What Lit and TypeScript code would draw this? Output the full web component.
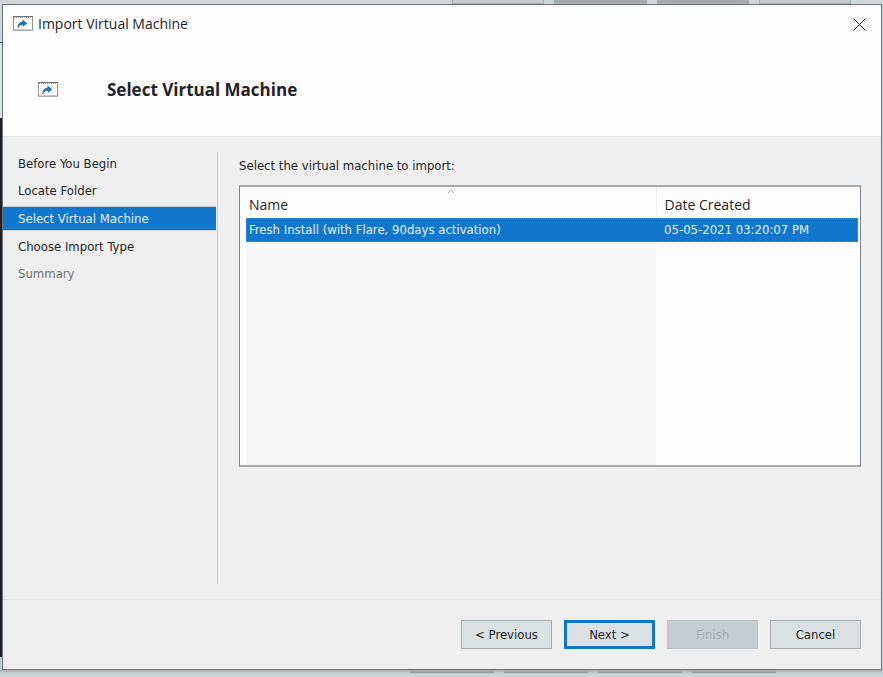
import { LitElement, html, css, svg } from "lit";
import { customElement, state } from "lit/decorators.js";

interface Machine {
  name: string;
  created: string;
}

const STEPS = [
  { label: "Before You Begin" },
  { label: "Locate Folder" },
  { label: "Select Virtual Machine", current: true },
  { label: "Choose Import Type" },
  { label: "Summary", pending: true },
];

const MACHINES: Machine[] = [
  { name: "Fresh Install (with Flare, 90days activation)", created: "05-05-2021 03:20:07 PM" },
];

const importIcon = svg`
  <svg width="20" height="16" viewBox="0 0 20 16" aria-hidden="true">
    <rect x="0.5" y="0.5" width="19" height="14" fill="#fdfdfd" stroke="#a5abae"/>
    <path d="M0 0.5H20" stroke="#69747a"/>
    <path d="M1 1.5H19" stroke="#8d979c" stroke-dasharray="1 1"/>
    <path d="M0.5 1V14M19.5 1V14" stroke="#8d979c"/>
    <path d="M1 13.5H19" stroke="#c6cdd0"/>
    <path d="M5 12C4.8 8.4 6.6 6.4 9.5 6V3.6L14.2 7.3L9.8 11V8.8C7.6 8.8 6.4 9.8 5 12Z" fill="#1177cd"/>
    <path d="M5 12C4.8 8.4 6.6 6.4 9.5 6" fill="none" stroke="#5d676f"/>
  </svg>`;

@customElement("app-root")
export class AppRoot extends LitElement {
  static styles = css`
    :host {
      display: block;
      font-family: "DejaVu Sans Condensed", "DejaVu Sans", sans-serif;
      font-stretch: condensed;
      font-size: 13px;
      line-height: 18px;
      color: #1f2326;
    }
    * {
      box-sizing: border-box;
    }
    .desktop {
      display: flex;
      flex-direction: column;
      min-height: 100vh;
      background:
        linear-gradient(#c6cdd0, #c6cdd0) right / 2px 100% no-repeat,
        linear-gradient(#d0d7da 0 42px, #3a3f42 42px 43px, #d9e1e3 43px 118px, #231f20 118px calc(100% - 20px), #c6cdd0 calc(100% - 20px));
    }
    .behind {
      display: flex;
      gap: 10px;
      height: 4px;
      padding: 0 32px 0 452px;
      background: #d0d7da;
    }
    .behind-tab {
      flex: 1;
      background: #c6cdd0;
      border: 1px solid #a5abae;
      border-top: 0;
    }
    .behind-tab.dim {
      background: #a5abae;
    }
    .below {
      display: flex;
      gap: 10px;
      height: 7px;
      padding: 0 107px 0 410px;
      background: linear-gradient(#a5abae, #c6cdd0 3px, #d0d7da);
    }
    .below-tab {
      flex: 1;
      height: 3px;
      background: #a5abae;
      border-bottom: 1px solid #8d979c;
    }
    .dialog {
      flex: 1;
      display: flex;
      flex-direction: column;
      margin: 0 1px 0 2px;
      border: 1px solid #69747a;
      background: #efefef;
    }
    .head {
      background: #fdfdfd;
      border-bottom: 1px solid #e2e4e4;
      height: 132px;
    }
    .titlebar {
      display: flex;
      align-items: center;
      gap: 5px;
      height: 38px;
      padding: 0 15px 0 10px;
      font-family: "Open Sans", sans-serif;
      font-size: 14px;
      font-stretch: normal;
    }
    .title {
      flex: 1;
    }
    .titlebar svg,
    .banner svg {
      display: block;
    }
    .close {
      border: 0;
      padding: 0;
      background: none;
    }
    .banner {
      display: flex;
      align-items: center;
      gap: 49px;
      height: 94px;
      padding: 0 35px;
    }
    h1 {
      margin: 0;
      font-family: "Open Sans", sans-serif;
      font-stretch: normal;
      font-size: 17px;
      line-height: 24px;
    }
    .body {
      flex: 1;
      display: flex;
      padding: 15px 20px 15px 0;
    }
    nav {
      width: 215px;
      flex: none;
      padding: 0 1px 0 0;
      border-right: 1px solid #c6cdd0;
    }
    ol {
      list-style: none;
      margin: 0;
      padding: 0;
      display: grid;
      gap: 4px;
    }
    .step {
      display: block;
      padding: 0 15px;
      line-height: 23px;
      color: inherit;
      text-decoration: none;
    }
    .step.current {
      background: #1177cd;
      background-clip: padding-box;
      border: solid #c6cdd0;
      border-width: 1px 0;
      color: #e6eef3;
    }
    .step.pending {
      color: #69747a;
    }
    main {
      flex: 1;
      padding: 5px 0 0 21px;
    }
    .prompt {
      margin: 0 0 10px;
    }
    .list {
      height: 282px;
      border: 1px solid #7d888e;
      border-top: 2px solid #a5abae;
      border-bottom: 2px solid #a5abae;
      padding: 0 2px 0 6px;
      background: #fdfdfd;
      display: flex;
    }
    table {
      flex: 1;
      height: 100%;
      border-collapse: collapse;
      table-layout: fixed;
    }
    th,
    td {
      padding: 0 0 0 3px;
      text-align: left;
      font-weight: normal;
    }
    .name {
      position: relative;
      width: 67%;
    }
    .created {
      padding-left: 8px;
    }
    th {
      height: 31px;
      padding-top: 4px;
      font-family: "Open Sans", sans-serif;
      font-size: 14px;
      font-stretch: normal;
    }
    th.name {
      border-right: 1px solid #efefef;
    }
    .sort {
      position: absolute;
      top: 2px;
      left: 49%;
    }
    .row {
      background: #1177cd;
      color: #e6eef3;
      outline: 1px dotted #a5785a;
      outline-offset: -1px;
    }
    .row td {
      height: 24px;
    }
    .rest .name {
      background: #f7f7f7;
    }
    footer {
      display: flex;
      justify-content: flex-end;
      gap: 12px;
      padding: 20px 20px;
      border-top: 1px solid #d9e1e3;
    }
    .btn {
      width: 91px;
      height: 29px;
      padding: 0;
      font: inherit;
      color: inherit;
      background: #d9e1e3;
      border: 1px solid #a5abae;
    }
    .btn.primary {
      border: 3px solid #1177cd;
    }
    .btn:disabled {
      background: #c6cdd0;
      border-color: #bdc4c7;
      color: #a5abae;
    }
  `;

  @state() private machines = MACHINES;

  render() {
    return html`
      <div class="desktop">
        <div class="behind" aria-hidden="true">
          <span class="behind-tab"></span><span class="behind-tab dim"></span>
          <span class="behind-tab dim"></span><span class="behind-tab"></span>
        </div>
        <div class="dialog" role="dialog" aria-label="Import Virtual Machine">
          <header class="head">
            <div class="titlebar">
              ${importIcon}<span class="title">Import Virtual Machine</span>
              <button class="close" aria-label="Close">
                <svg width="13" height="13" viewBox="0 0 13 13">
                  <path d="M0.5 0.5L12.5 12.5M12.5 0.5L0.5 12.5" stroke="#231f20" />
                </svg>
              </button>
            </div>
            <div class="banner">${importIcon}<h1>Select Virtual Machine</h1></div>
          </header>
          <div class="body">
            <nav aria-label="Steps">
              <ol>
                ${STEPS.map(
                  (s) => html`<li>
                    <a href="#" class="step ${s.current ? "current" : ""} ${s.pending ? "pending" : ""}">${s.label}</a>
                  </li>`
                )}
              </ol>
            </nav>
            <main>
              <p class="prompt" id="prompt">Select the virtual machine to import:</p>
              <div class="list">
                <table aria-labelledby="prompt">
                  <thead>
                    <tr>
                      <th class="name">
                        Name
                        <svg class="sort" width="8" height="5" viewBox="0 0 8 5">
                          <path d="M1 4L4 1L7 4" fill="none" stroke="#a5abae" />
                        </svg>
                      </th>
                      <th class="created">Date Created</th>
                    </tr>
                  </thead>
                  <tbody>
                    ${this.machines.map(
                      (m) => html`<tr class="row">
                        <td class="name">${m.name}</td>
                        <td class="created">${m.created}</td>
                      </tr>`
                    )}
                    <tr class="rest"><td class="name"></td><td></td></tr>
                  </tbody>
                </table>
              </div>
            </main>
          </div>
          <footer>
            <button class="btn">&lt; Previous</button>
            <button class="btn primary">Next &gt;</button>
            <button class="btn" disabled>Finish</button>
            <button class="btn">Cancel</button>
          </footer>
        </div>
        <div class="below" aria-hidden="true">
          <span class="below-tab"></span><span class="below-tab"></span>
          <span class="below-tab"></span><span class="below-tab"></span>
        </div>
      </div>
    `;
  }
}
